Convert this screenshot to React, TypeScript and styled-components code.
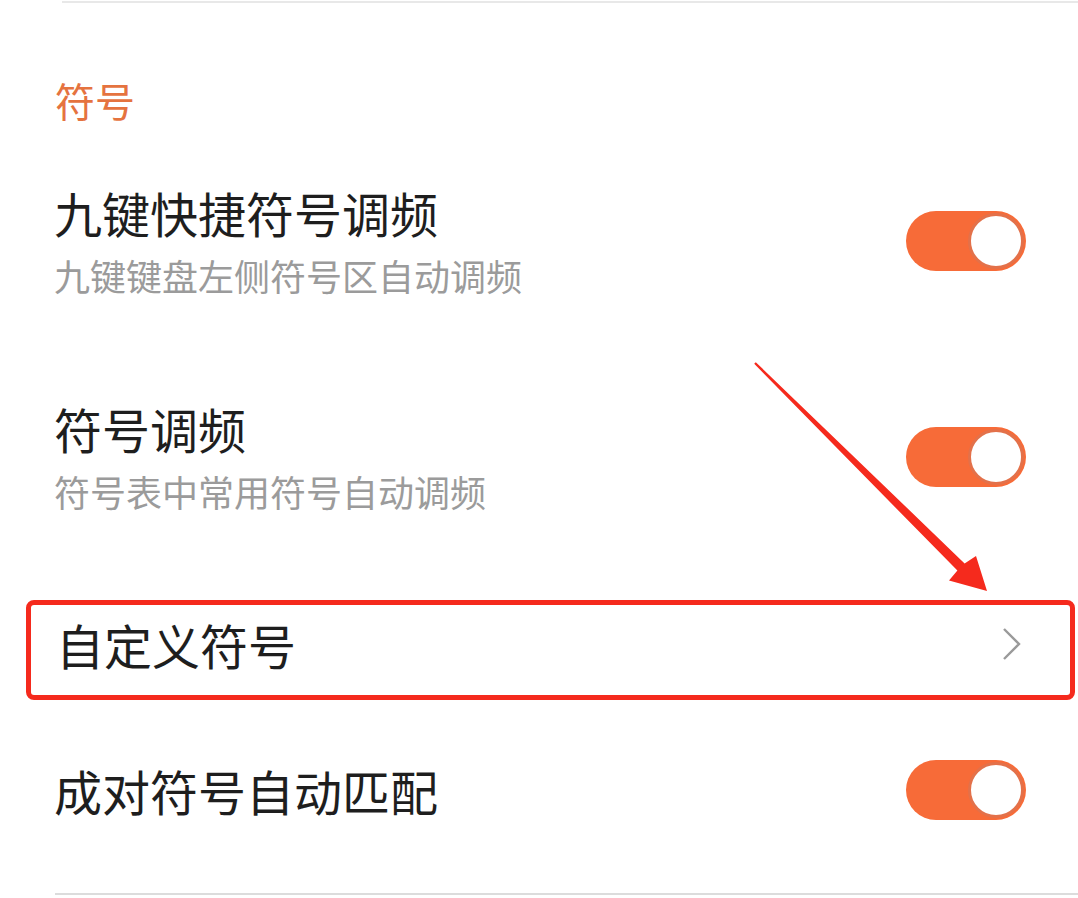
import styled, { createGlobalStyle } from 'styled-components';

const GlobalStyle = createGlobalStyle`
  html, body {
    margin: 0;
    padding: 0;
    background: #ffffff;
  }
  body {
    font-family: 'Noto Sans CJK SC', 'Noto Sans', sans-serif;
  }
`;

type Item = {
  title: string;
  desc?: string;
  kind: 'toggle' | 'link';
};

const rows: Item[] = [
  { title: '九键快捷符号调频', desc: '九键键盘左侧符号区自动调频', kind: 'toggle' },
  { title: '符号调频', desc: '符号表中常用符号自动调频', kind: 'toggle' },
  { title: '自定义符号', kind: 'link' },
  { title: '成对符号自动匹配', kind: 'toggle' },
];

export default function App() {
  return (
    <Page>
      <GlobalStyle />
      <Rule $left={62} $top={1} $color='#e8e8e8' />
      <SectionTitle>符号</SectionTitle>

      {rows.map(({ title, desc, kind }, index) => (
        <Row
          key={title}
          $top={[46, 66, 68, 40][index]}
          $height={[150, 150, 100, 100][index]}
          $marked={kind === 'link'}
        >
          <TextBlock>
            <Title>{title}</Title>
            {desc && <Desc>{desc}</Desc>}
          </TextBlock>
          {kind === 'toggle' ? (
            <Toggle>
              <Knob />
            </Toggle>
          ) : (
            <svg width='22' height='36' viewBox='0 0 22 36'>
              <path
                d='M3 3 L18 18 L3 33'
                fill='none'
                stroke='#9a9a9a'
                strokeWidth='2.4'
              />
            </svg>
          )}
        </Row>
      ))}

      <Rule $left={55} $top={53} $color='#dcdcdc' />

      <Overlay width='1078' height='898' viewBox='0 0 1078 898'>
        <polygon
          points='755.8,362.2 964.6,563.4 976,556 987,591 949,580.5 957.4,570.6 754.2,363.8'
          fill='#f52a1d'
        />
      </Overlay>
    </Page>
  );
}

const Page = styled.div`
  position: relative;
  width: 1078px;
  height: 898px;
  overflow: hidden;
  background: #ffffff;
  display: flex;
  flex-direction: column;
`;

const Rule = styled.div<{ $left: number; $top: number; $color: string }>`
  height: 2px;
  margin-top: ${(p) => p.$top}px;
  margin-left: ${(p) => p.$left}px;
  background: ${(p) => p.$color};
  flex-shrink: 0;
`;

const SectionTitle = styled.div`
  margin-top: 77px;
  padding-left: 55px;
  font-size: 40px;
  line-height: 40px;
  color: #e5733f;
`;

const Row = styled.div<{ $top: number; $height: number; $marked: boolean }>`
  box-sizing: border-box;
  display: flex;
  align-items: center;
  justify-content: space-between;
  flex-shrink: 0;
  height: ${(p) => p.$height}px;
  margin-top: ${(p) => p.$top}px;
  margin-left: ${(p) => (p.$marked ? 26 : 0)}px;
  margin-right: ${(p) => (p.$marked ? 3 : 0)}px;
  padding: ${(p) => (p.$marked ? '0 47px 12px 25px' : '0 52px 0 54px')};
  border: ${(p) => (p.$marked ? '5px solid #f52a1d' : 'none')};
  border-radius: 8px;
`;

const TextBlock = styled.div`
  display: flex;
  flex-direction: column;
  gap: 8px;
`;

const Title = styled.div`
  font-size: 48px;
  line-height: 60px;
  color: #1e1e1e;
`;

const Desc = styled.div`
  font-size: 36px;
  line-height: 50px;
  color: #9b9b9b;
`;

const Toggle = styled.div`
  box-sizing: border-box;
  width: 120px;
  height: 60px;
  border-radius: 30px;
  background: #f76b38;
  display: flex;
  align-items: center;
  justify-content: flex-end;
  padding-right: 2px;
`;

const Knob = styled.div`
  box-sizing: border-box;
  width: 56px;
  height: 56px;
  border-radius: 50%;
  background: #ffffff;
  border: 3px solid #e3714a;
`;

const Overlay = styled.svg`
  position: absolute;
  left: 0;
  top: 0;
  pointer-events: none;
`;
